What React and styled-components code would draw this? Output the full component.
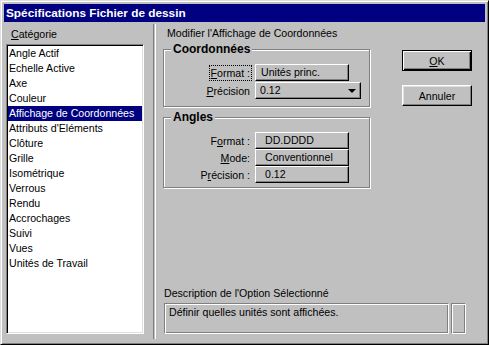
import React from "react";
import styled, { createGlobalStyle } from "styled-components";

const GlobalStyle = createGlobalStyle`
    body {
        margin: 0;
        background: #c0c0c0;
        font-family: "Liberation Sans", Arial, sans-serif;
        font-size: 10.6px;
    }
`;

const categories = [
    "Angle Actif",
    "Echelle Active",
    "Axe",
    "Couleur",
    "Affichage de Coordonnées",
    "Attributs d'Eléments",
    "Clôture",
    "Grille",
    "Isométrique",
    "Verrous",
    "Rendu",
    "Accrochages",
    "Suivi",
    "Vues",
    "Unités de Travail",
];

const App = () => {
    return (
        <>
            <GlobalStyle />
            <StyledWindow>
                <StyledTitleBar>Spécifications Fichier de dessin</StyledTitleBar>
                <StyledBody>
                    <StyledLeftPane>
                        <StyledPaneLabel><u>C</u>atégorie</StyledPaneLabel>
                        <StyledListBox>
                            {categories.map((name, i) => (
                                <StyledListItem key={name} $selected={i === 4}>{name}</StyledListItem>
                            ))}
                        </StyledListBox>
                    </StyledLeftPane>
                    <StyledDivider />
                    <StyledRightPane>
                        <StyledTopRow>
                            <StyledSettings>
                                <StyledHeading>Modifier l'Affichage de Coordonnées</StyledHeading>
                                <StyledGroup>
                                    <StyledLegend>Coordonnées</StyledLegend>
                                    <StyledFieldGrid $gap={1}>
                                        <StyledFieldLabel $focus><u>F</u>ormat :</StyledFieldLabel>
                                        <StyledValueButton $indent={5}>Unités princ.</StyledValueButton>
                                        <StyledFieldLabel><u>P</u>récision</StyledFieldLabel>
                                        <StyledDropdown>
                                            <span>0.12</span>
                                            <svg width="8" height="4" viewBox="0 0 8 4">
                                                <path d="M0 0h8L4 4z" fill="#000" />
                                            </svg>
                                        </StyledDropdown>
                                    </StyledFieldGrid>
                                </StyledGroup>
                                <StyledGroup $angles>
                                    <StyledLegend>Angles</StyledLegend>
                                    <StyledFieldGrid $gap={0}>
                                        <StyledFieldLabel>F<u>o</u>rmat :</StyledFieldLabel>
                                        <StyledValueButton $indent={9}>DD.DDDD</StyledValueButton>
                                        <StyledFieldLabel><u>M</u>ode:</StyledFieldLabel>
                                        <StyledValueButton $indent={9}>Conventionnel</StyledValueButton>
                                        <StyledFieldLabel>P<u>r</u>écision :</StyledFieldLabel>
                                        <StyledValueButton $indent={9}>0.12</StyledValueButton>
                                    </StyledFieldGrid>
                                </StyledGroup>
                            </StyledSettings>
                            <StyledButtonColumn>
                                <StyledPushButton $default><u>O</u>K</StyledPushButton>
                                <StyledPushButton>Annuler</StyledPushButton>
                            </StyledButtonColumn>
                        </StyledTopRow>
                        <StyledDescSection>
                            <StyledDescLabel>Description de l'Option Sélectionné</StyledDescLabel>
                            <StyledDescRow>
                                <StyledDescBox>Définir quelles unités sont affichées.</StyledDescBox>
                                <StyledDescTail />
                            </StyledDescRow>
                        </StyledDescSection>
                    </StyledRightPane>
                </StyledBody>
            </StyledWindow>
        </>
    );
};

const StyledWindow = styled.div`
    width: 489px;
    height: 345px;
    box-sizing: border-box;
    padding: 3px;
    background: #c0c0c0;
    border: 1px solid;
    border-color: #dfdfdf #000 #000 #dfdfdf;
    box-shadow: inset 1px 1px #fff, inset -1px -1px #808080;
    display: flex;
    flex-direction: column;
    color: #000;
`;
const StyledTitleBar = styled.div`
    height: 18px;
    flex-shrink: 0;
    background: #000080;
    color: #fff;
    font-weight: bold;
    font-size: 11.8px;
    display: flex;
    align-items: center;
    padding-left: 2px;
    white-space: nowrap;
`;
const StyledBody = styled.div`
    flex: 1;
    display: flex;
    min-height: 0;
`;
const StyledLeftPane = styled.div`
    width: 138px;
    margin-left: 2px;
    display: flex;
    flex-direction: column;
`;
const StyledPaneLabel = styled.div`
    line-height: 13px;
    padding: 6px 0 0 5px;
    margin-bottom: 3px;
`;
const StyledListBox = styled.div`
    height: 290px;
    box-sizing: border-box;
    padding: 1px;
    background: #fff;
    border: 1px solid;
    border-color: #808080 #fff #fff #808080;
    box-shadow: inset 1px 1px #000, inset -1px -1px #dfdfdf;
`;
const StyledListItem = styled.div`
    height: 15px;
    line-height: 15px;
    padding-left: 1px;
    white-space: nowrap;
    background: ${(p) => (p.$selected ? "#000080" : "transparent")};
    color: ${(p) => (p.$selected ? "#fff" : "#000")};
`;
const StyledDivider = styled.div`
    width: 1px;
    margin: 2px 0 2px 9px;
    border-left: 1px solid #808080;
    border-right: 1px solid #fff;
`;
const StyledRightPane = styled.div`
    flex: 1;
    padding-left: 7px;
    display: flex;
    flex-direction: column;
`;
const StyledTopRow = styled.div`
    display: flex;
`;
const StyledSettings = styled.div`
    width: 208px;
    display: flex;
    flex-direction: column;
`;
const StyledHeading = styled.div`
    line-height: 13px;
    margin: 5px 0 3px 4px;
    white-space: nowrap;
`;
const StyledGroup = styled.fieldset`
    margin: ${(p) => (p.$angles ? "4px" : "0")} 0 0 0;
    padding: 8px 0 ${(p) => (p.$angles ? "4px" : "7px")} 0;
    min-inline-size: 0;
    width: 207px;
    box-sizing: border-box;
    border: 1px solid #808080;
    box-shadow: inset 1px 1px #fff, 1px 1px #fff;
`;
const StyledLegend = styled.legend`
    margin-left: 7px;
    padding: 0 2px;
    background: #c0c0c0;
    font-weight: bold;
    font-size: 12px;
    line-height: 13px;
`;
const StyledFieldGrid = styled.div`
    display: grid;
    grid-template-columns: 88px auto;
    grid-auto-rows: 17px;
    column-gap: 3px;
    row-gap: ${(p) => p.$gap}px;
    align-items: center;
    justify-items: start;
`;
const StyledFieldLabel = styled.div`
    justify-self: end;
    line-height: 14px;
    padding: 0 1px;
    border: 1px dotted ${(p) => (p.$focus ? "#000" : "transparent")};
    white-space: nowrap;
`;
const StyledValueButton = styled.div`
    width: 94px;
    height: 17px;
    box-sizing: border-box;
    padding-left: ${(p) => p.$indent}px;
    line-height: 15px;
    border: 1px solid;
    border-color: #fff #000 #000 #fff;
    box-shadow: inset -1px -1px #808080;
    white-space: nowrap;
`;
const StyledDropdown = styled(StyledValueButton)`
    width: 106px;
    display: flex;
    align-items: center;
    justify-content: space-between;
    padding: 0 4px 0 4px;
`;
const StyledButtonColumn = styled.div`
    margin: 28px 0 0 31px;
    display: flex;
    flex-direction: column;
    gap: 14px;
`;
const StyledPushButton = styled.div`
    width: 70px;
    height: 21px;
    box-sizing: border-box;
    display: flex;
    align-items: center;
    justify-content: center;
    border: 1px solid;
    border-color: ${(p) => (p.$default ? "#000" : "#fff #000 #000 #fff")};
    box-shadow: ${(p) =>
        p.$default
            ? "inset 1px 1px #fff, inset -1px -1px #000, inset -2px -2px #808080"
            : "inset -1px -1px #808080, inset 1px 1px #dfdfdf"};
`;
const StyledDescSection = styled.div`
    margin-top: auto;
    margin-bottom: 7px;
`;
const StyledDescLabel = styled.div`
    line-height: 13px;
    padding-left: 1px;
    margin-bottom: 3px;
`;
const StyledDescRow = styled.div`
    display: flex;
    gap: 2px;
    margin-left: 1px;
`;
const StyledDescBox = styled.div`
    width: 285px;
    height: 31px;
    box-sizing: border-box;
    padding: 2px 0 0 4px;
    line-height: 13px;
    border: 1px solid;
    border-color: #808080 #fff #fff #808080;
    box-shadow: inset 1px 1px #fff, inset -1px -1px #808080;
`;
const StyledDescTail = styled(StyledDescBox)`
    width: 15px;
    padding: 0;
`;

export default App;
